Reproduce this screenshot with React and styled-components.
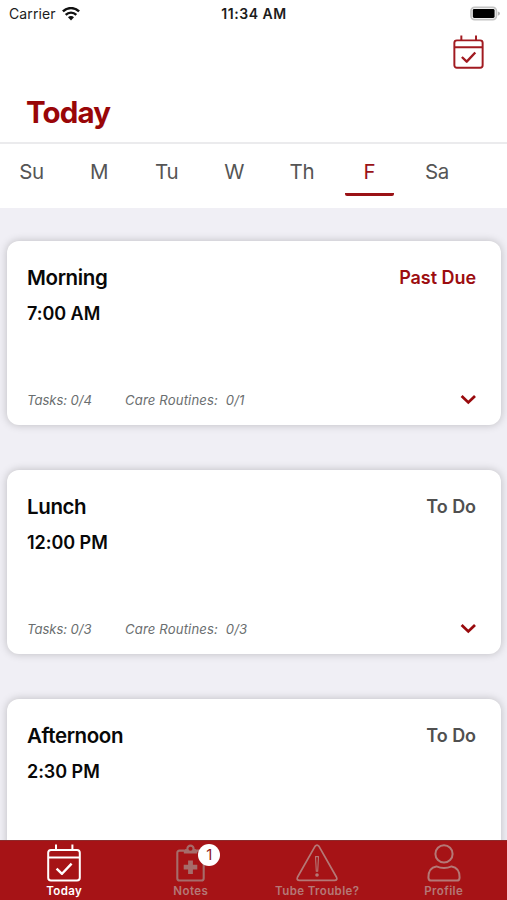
import React, { Fragment } from 'react';
import styled, { createGlobalStyle } from 'styled-components';


// constants
const DAYS = ['Su', 'M', 'Tu', 'W', 'Th', 'F', 'Sa'];
const ACTIVE_DAY = 'F';

const ROUTINES = [
  { name: 'Morning', time: '7:00 AM', status: 'Past Due', tasks: '0/4', care: '0/1' },
  { name: 'Lunch', time: '12:00 PM', status: 'To Do', tasks: '0/3', care: '0/3' },
  { name: 'Afternoon', time: '2:30 PM', status: 'To Do' },
];


// styled-components
const GlobalStyle = createGlobalStyle`
  * {
    box-sizing: border-box;
  }
  body {
    margin: 0;
    font-family: Inter, "Liberation Sans", sans-serif;
    background: #f0eff5;
  }
`;

const Screen = styled.div`
  display: flex;
  flex-direction: column;
  width: 507px;
  height: 900px;
  overflow: hidden;
`;

const StatusBar = styled.div`
  display: grid;
  grid-template-columns: 1fr auto 1fr;
  align-items: center;
  height: 28px;
  padding: 0 6px 0 9px;
  background: #fff;
  color: #1c1c1c;
  font-size: 14px;
  line-height: 28px;
`;

const Carrier = styled.div`
  display: flex;
  align-items: center;
  gap: 6px;
  letter-spacing: 0.1px;
`;

const Clock = styled.div`
  font-weight: 600;
  letter-spacing: 0.55px;
  margin-right: 2px;
`;

const Battery = styled.div`
  display: flex;
  justify-content: flex-end;
`;

const Header = styled.header`
  display: flex;
  flex-direction: column;
  height: 116px;
  padding: 7px 23px 0 26px;
  background: #fff;
  border-bottom: 2px solid #ebebed;
`;

const HeaderAction = styled.div`
  display: flex;
  justify-content: flex-end;
  height: 38px;
  color: #a11a20;
`;

const Title = styled.h1`
  margin: 20px 0 0;
  color: #990608;
  font-size: 29.5px;
  font-weight: 700;
  line-height: 39px;
  letter-spacing: -0.85px;
`;

const Week = styled.nav`
  display: flex;
  gap: 18.6px;
  height: 64px;
  padding: 8px 0 0 7px;
  background: #fff;
`;

const Day = styled.div`
  flex: none;
  width: 49px;
  height: 44px;
  border-bottom: 3px solid ${({ $active }) => ($active ? '#9a1216' : 'transparent')};
  border-radius: 2px;
  color: ${({ $active }) => ($active ? '#9a1216' : '#555')};
  font-size: 20.5px;
  line-height: 39px;
  letter-spacing: -0.3px;
  text-align: center;
`;

const RoutineList = styled.main`
  display: flex;
  flex: 1;
  flex-direction: column;
  gap: 45px;
  min-height: 0;
  padding: 33px 6px 0 7px;
  overflow: hidden;
`;

const Card = styled.section`
  display: flex;
  flex: none;
  flex-direction: column;
  justify-content: space-between;
  height: 184px;
  padding: 22px 25px 11px 20px;
  background: #fff;
  border-radius: 12px;
  box-shadow: 0 0 9px rgba(0, 0, 0, 0.22);
`;

const CardRow = styled.div`
  display: flex;
  align-items: center;
  justify-content: space-between;
`;

const CardName = styled.h2`
  margin: 0;
  color: #080808;
  font-size: 20.5px;
  font-weight: 600;
  line-height: 30px;
  letter-spacing: -0.38px;
`;

const CardTime = styled.div`
  margin-top: 8px;
  color: #080808;
  font-size: 18px;
  font-weight: 600;
  line-height: 26px;
  letter-spacing: -0.04px;
`;

const Status = styled.div`
  color: ${({ $late }) => ($late ? '#9c0d10' : '#505050')};
  font-size: 18px;
  font-weight: 600;
  line-height: 28px;
  letter-spacing: -0.05px;
`;

const Counts = styled.div`
  display: flex;
  color: #6a6e6f;
  font-size: 13.1px;
  font-style: italic;
  line-height: 28px;
  letter-spacing: 0.16px;
  white-space: pre;
`;

const TaskCount = styled.span`
  width: 98px;
  letter-spacing: -0.05px;
`;

const TabBar = styled.footer`
  display: grid;
  grid-template-columns: repeat(4, 1fr);
  height: 60px;
  padding-left: 1px;
  background: #a61316;
  border-top: 1px solid #8d2a2b;
`;

const Tab = styled.div`
  display: flex;
  flex-direction: column;
  align-items: center;
  padding-top: 3px;
  color: ${({ $active }) => ($active ? '#fff' : '#b57876')};
  font-size: 11.5px;
  font-weight: 600;
  line-height: 14px;
  letter-spacing: 0.4px;
`;

const TabIcon = styled.div`
  position: relative;
  height: 40px;
`;

const Badge = styled.span`
  position: absolute;
  top: 0;
  right: -15px;
  width: 22px;
  height: 22px;
  border-radius: 50%;
  background: #fff;
  color: #8f1a1c;
  font-size: 15px;
  font-weight: 400;
  line-height: 22px;
  letter-spacing: 0;
  text-align: center;
`;


// icons
const WifiIcon = () => (
  <svg width="18" height="14" viewBox="0 0 18 14" fill="none" stroke="#111" strokeWidth="2.4">
    <path d="M0.9 4.4 A11.5 11.5 0 0 1 17.1 4.4" />
    <path d="M3.7 7.8 A7.5 7.5 0 0 1 14.3 7.8" />
    <path d="M6 10.3 A4.2 4.2 0 0 1 12 10.3 L9 13.4 Z" fill="#111" stroke="none" />
  </svg>
);

const BatteryIcon = () => (
  <svg width="32" height="16" viewBox="0 0 32 16">
    <rect x="2" y="1.4" width="25.4" height="12.2" rx="3.6" fill="#fff" stroke="#c4c4c4" strokeWidth="1.7" />
    <rect x="3.8" y="3" width="21.8" height="9" rx="1.4" fill="#000" />
    <path d="M28.9 5.4 Q31 6 31 7.6 Q31 9.2 28.9 9.8 Z" fill="#b5b5b5" />
  </svg>
);

const CalendarIcon = ({ width, height, strokeWidth }) => (
  <svg
    width={width}
    height={height}
    viewBox="0 0 34 38"
    fill="none"
    stroke="currentColor"
    strokeWidth={strokeWidth}
    strokeLinejoin="round"
  >
    <rect x="1.2" y="6" width="31.6" height="30.6" rx="2.8" />
    <path d="M1.2 13.6 H32.8 M9 0.6 V6 M25.4 0.6 V6" />
    <path d="M9.6 24.6 L15 29.8 L24.6 19.6" strokeWidth={strokeWidth * 1.2} />
  </svg>
);

const ClipboardIcon = () => (
  <svg width="29" height="38" viewBox="0 0 29 38" fill="none" stroke="#a66c6a" strokeWidth="2.1">
    <path d="M8 6.6 H3.6 Q1.3 6.6 1.3 8.9 V34.2 Q1.3 36.5 3.6 36.5 H25.4 Q27.7 36.5 27.7 34.2 V8.9 Q27.7 6.6 25.4 6.6 H21" />
    <path d="M7.8 9.6 V7 Q7.8 5 9.8 5 H19.2 Q21.2 5 21.2 7 V9.6 Z" fill="#a66c6a" stroke="none" />
    <circle cx="14.5" cy="4.7" r="3.1" fill="#a61316" />
    <path d="M14.5 16.4 V30 M7.7 23.2 H21.3" strokeWidth="4.8" />
  </svg>
);

const WarningIcon = () => (
  <svg width="42" height="38" viewBox="0 0 42 38" fill="none" stroke="currentColor" strokeWidth="1.7" strokeLinejoin="round">
    <path d="M19 2.4 Q21 0 23 2.4 L40.4 33 Q41.8 36.3 38.6 36.4 H3.4 Q0.2 36.3 1.6 33 Z" />
    <path d="M19.5 12.6 H22.5 L21.7 27.2 H20.3 Z" strokeWidth="1.1" />
    <circle cx="21" cy="31" r="1.8" fill="currentColor" stroke="none" />
  </svg>
);

const ProfileIcon = () => (
  <svg width="34" height="38" viewBox="0 0 34 38" fill="none" stroke="currentColor" strokeWidth="2" strokeLinejoin="round">
    <circle cx="17" cy="9.9" r="8.6" />
    <path d="M9.4 22.4 Q17 25.6 24.6 22.4 Q32.6 23.6 32.6 33.4 Q32.6 36.6 29.6 36.6 H4.4 Q1.4 36.6 1.4 33.4 Q1.4 23.6 9.4 22.4 Z" />
  </svg>
);

const ChevronIcon = () => (
  <svg width="16" height="12" viewBox="0 0 16 12" fill="none" stroke="#990a0d" strokeWidth="2.8">
    <path d="M1.6 2 L8.3 8.4 L15 2" />
  </svg>
);


const RoutineCard = ({ routine }) => (
  <Card>
    <div>
      <CardRow>
        <CardName>{routine.name}</CardName>
        <Status $late={routine.status === 'Past Due'}>{routine.status}</Status>
      </CardRow>
      <CardTime>{routine.time}</CardTime>
    </div>
    {routine.tasks && (
      <CardRow>
        <Counts>
          <TaskCount>{`Tasks: ${routine.tasks}`}</TaskCount>
          <span>{`Care Routines:  ${routine.care}`}</span>
        </Counts>
        <ChevronIcon />
      </CardRow>
    )}
  </Card>
);

export const Today = () => (
  <Fragment>
    <GlobalStyle />
    <Screen>
      <StatusBar>
        <Carrier>
          Carrier
          <WifiIcon />
        </Carrier>
        <Clock>11:34 AM</Clock>
        <Battery>
          <BatteryIcon />
        </Battery>
      </StatusBar>
      <Header>
        <HeaderAction>
          <CalendarIcon width={31} height={34} strokeWidth={2.2} />
        </HeaderAction>
        <Title>Today</Title>
      </Header>
      <Week>
        {DAYS.map((day) => (
          <Day key={day} $active={day === ACTIVE_DAY}>{day}</Day>
        ))}
      </Week>
      <RoutineList>
        {ROUTINES.map((routine) => (
          <RoutineCard routine={routine} key={routine.name} />
        ))}
      </RoutineList>
      <TabBar>
        <Tab $active>
          <TabIcon><CalendarIcon width={34} height={38} strokeWidth={2} /></TabIcon>
          Today
        </Tab>
        <Tab>
          <TabIcon>
            <ClipboardIcon />
            <Badge>1</Badge>
          </TabIcon>
          Notes
        </Tab>
        <Tab>
          <TabIcon><WarningIcon /></TabIcon>
          Tube Trouble?
        </Tab>
        <Tab>
          <TabIcon><ProfileIcon /></TabIcon>
          Profile
        </Tab>
      </TabBar>
    </Screen>
  </Fragment>
);

export default Today;
